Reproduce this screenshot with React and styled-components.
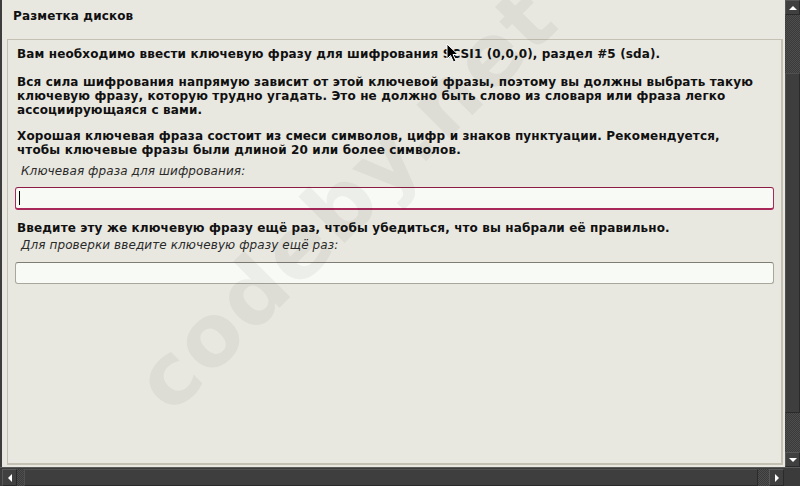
import React from "react";
import styled, { createGlobalStyle } from "styled-components";

const GlobalStyle = createGlobalStyle`
  html, body {
    margin: 0;
    padding: 0;
    background: #e8e7e0;
  }
  body {
    font-family: "DejaVu Sans", "Liberation Sans", sans-serif;
  }
`;

const Screen = styled.div`
  position: relative;
  width: 800px;
  height: 486px;
  overflow: hidden;
  display: flex;
  flex-direction: column;
  background: #e8e7e0;
  font-family: "DejaVu Sans", "Liberation Sans", sans-serif;
  color: #101010;
`;

const Body = styled.div`
  flex: 1;
  display: flex;
  min-height: 0;
`;

const LeftEdge = styled.div`
  width: 2px;
  background: #3d3d3d;
`;

const Main = styled.div`
  flex: 1;
  display: flex;
  flex-direction: column;
  padding: 0 2px 2px 5px;
`;

const Title = styled.h1`
  margin: 0;
  height: 39px;
  padding: 9px 0 0 6px;
  box-sizing: border-box;
  font-size: 12px;
  font-weight: bold;
  line-height: 14px;
  letter-spacing: 0.13px;
`;

const Panel = styled.div`
  flex: 1;
  border: 1px solid #c4c1b4;
  border-right-width: 2px;
  border-bottom-width: 2px;
  padding: 7px 7px 5px;
`;

const Para = styled.p`
  margin: 0 0 ${(p) => p.$gap ?? 12}px;
  padding-left: 2px;
  font-size: 12px;
  font-weight: bold;
  line-height: 14px;
  letter-spacing: 0.13px;
  white-space: nowrap;
`;

const Label = styled.div`
  padding-left: 6px;
  margin-bottom: ${(p) => p.$gap ?? 9}px;
  font-size: 12px;
  font-style: italic;
  line-height: 14px;
  letter-spacing: 0.1px;
  color: #2a2a2a;
`;

const Field = styled.div`
  height: ${(p) => (p.$focused ? 23 : 22)}px;
  box-sizing: border-box;
  margin-bottom: ${(p) => p.$gap || 0}px;
  border: 1px solid ${(p) => (p.$focused ? "#a8285a" : "#a9a79c")};
  border-top-color: ${(p) => (p.$focused ? "#8c1c46" : "#7f7d74")};
  border-bottom-width: ${(p) => (p.$focused ? 2 : 1)}px;
  border-radius: 3px;
  background: #f8faf6;
  display: flex;
  align-items: center;
  padding-left: 3px;
`;

const Caret = styled.span`
  width: 1px;
  height: 14px;
  background: #000;
`;

const VScroll = styled.div`
  width: 15px;
  display: flex;
  flex-direction: column;
  background: #3b3b3b;
`;

const checker = `
  background: repeating-conic-gradient(#3a3a3a 0 25%, #4e4e4e 0 50%) 0 0 / 2px 2px;
`;

const Trough = styled.div`
  ${checker}
  flex: ${(p) => p.$flex || "none"};
  ${(p) => (p.$size ? `height: ${p.$size}px;` : "")}
  ${(p) => (p.$w ? `width: ${p.$w}px; height: 17px;` : "")}
`;

const Thumb = styled.div`
  flex: ${(p) => p.$flex || "none"};
  ${(p) => (p.$size ? `height: ${p.$size}px;` : "")}
  ${(p) => (p.$horizontal ? "height: 17px;" : "")}
  background: #3e3e3e;
  border: 1px solid #2a2a2a;
  border-top-color: #505050;
  border-left-color: #505050;
  box-sizing: border-box;
`;

const ArrowButton = styled.div`
  width: ${(p) => p.$w || 15}px;
  height: ${(p) => p.$h || 15}px;
  flex: none;
  box-sizing: border-box;
  background: #404040;
  border: 1px solid #2a2a2a;
  border-top-color: #585858;
  border-left-color: #585858;
  display: flex;
  align-items: center;
  justify-content: center;
`;

const HScroll = styled.div`
  height: 19px;
  display: flex;
  align-items: flex-start;
  background: #3b3b3b;
  padding: 1px 0 0 2px;
  box-sizing: border-box;
  border-top: 1px solid #5a5a5a;
`;

const HCorner = styled.div`
  width: 16px;
  height: 18px;
  background: #3b3b3b;
`;

const Watermark = styled.div`
  position: absolute;
  left: 150px;
  top: 345px;
  font-family: "DejaVu Sans", sans-serif;
  font-weight: bold;
  font-size: 86px;
  letter-spacing: 2px;
  color: rgba(40, 40, 30, 0.055);
  transform: rotate(-45deg);
  transform-origin: left center;
  pointer-events: none;
  white-space: nowrap;
`;

const Pointer = styled.svg`
  position: absolute;
  left: 446px;
  top: 43px;
`;

const Tri = ({ dir }) => {
  const pts = {
    up: "1,6 5,2 9,6",
    down: "1,2 5,6 9,2",
    left: "6,0 2,4 6,8",
    right: "2,0 6,4 2,8",
  }[dir];
  const horiz = dir === "left" || dir === "right";
  return (
    <svg width={horiz ? 8 : 10} height={8} viewBox={horiz ? "0 0 8 8" : "0 0 10 8"}>
      <polygon points={pts} fill="#fff" />
    </svg>
  );
};

const App = () => {
  return (
    <>
      <GlobalStyle />
      <Screen>
        <Body>
          <LeftEdge />
          <Main>
            <Title>Разметка дисков</Title>
            <Panel>
              <Para $gap={14}>
                Вам необходимо ввести ключевую фразу для шифрования SCSI1 (0,0,0), раздел #5 (sda).
              </Para>
              <Para>
                Вся сила шифрования напрямую зависит от этой ключевой фразы, поэтому вы должны выбрать такую
                <br />
                ключевую фразу, которую трудно угадать. Это не должно быть слово из словаря или фраза легко
                <br />
                ассоциирующаяся с вами.
              </Para>
              <Para $gap={7}>
                Хорошая ключевая фраза состоит из смеси символов, цифр и знаков пунктуации. Рекомендуется,
                <br />
                чтобы ключевые фразы были длиной 20 или более символов.
              </Para>
              <Label>Ключевая фраза для шифрования:</Label>
              <Field $focused $gap={11}>
                <Caret />
              </Field>
              <Para $gap={3}>Введите эту же ключевую фразу ещё раз, чтобы убедиться, что вы набрали её правильно.</Para>
              <Label $gap={10}>Для проверки введите ключевую фразу ещё раз:</Label>
              <Field />
            </Panel>
          </Main>
          <VScroll>
            <ArrowButton>
              <Tri dir="up" />
            </ArrowButton>
            <Trough $size={58} />
            <Thumb $size={340} />
            <Trough $flex="1" />
            <ArrowButton>
              <Tri dir="down" />
            </ArrowButton>
          </VScroll>
        </Body>
        <HScroll>
          <ArrowButton $h={17}>
            <Tri dir="left" />
          </ArrowButton>
          <Trough $w={7} />
          <Thumb $flex="1" $horizontal />
          <Trough $w={11} />
          <ArrowButton $h={17}>
            <Tri dir="right" />
          </ArrowButton>
          <HCorner />
        </HScroll>
        <Watermark>codeby.net</Watermark>
        <Pointer width="13" height="20" viewBox="0 0 13 20">
          <polygon points="1,1 1,16 4.5,12.5 7.5,19 10,18 7,11.5 12,11.5" fill="#000" stroke="#fff" strokeWidth="1" />
        </Pointer>
      </Screen>
    </>
  );
};

export default App;
